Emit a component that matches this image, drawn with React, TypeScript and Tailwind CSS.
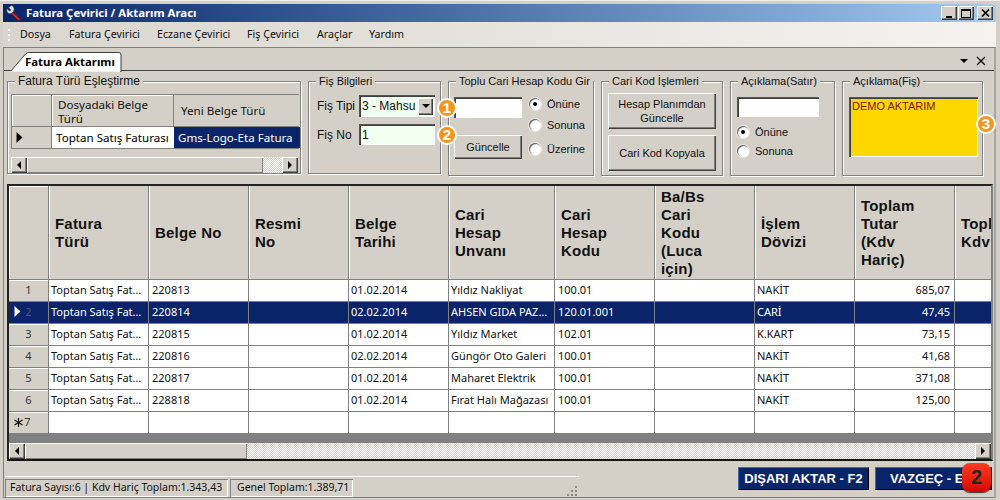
import React from "react";

const arial = "font-['Liberation_Sans',Arial,sans-serif]";
const btn = "bg-[#d4d0c8] text-[#111] shadow-[inset_1px_1px_0_#fff,inset_-1px_-1px_0_#404040,inset_-2px_-2px_0_#808080] flex items-center justify-center text-center";
const sunken = "shadow-[inset_1px_1px_0_#555,inset_2px_2px_0_#404040,inset_-1px_-1px_0_#fff]";
const track = "bg-[repeating-conic-gradient(#d4d0c8_0_25%,#ffffff_0_50%)] bg-[length:2px_2px]";

function Arrow({ dir, color = "#000" }: { dir: "l" | "r" | "d"; color?: string }) {
  const pts = dir === "l" ? "5,0 5,8 1,4" : dir === "r" ? "1,0 1,8 5,4" : "0,1 8,1 4,5";
  return (
    <svg width={dir === "d" ? 8 : 6} height={dir === "d" ? 6 : 8} viewBox={dir === "d" ? "0 0 8 6" : "0 0 6 8"}>
      <polygon points={pts} fill={color} />
    </svg>
  );
}

function BigArrow({ color = "#000" }: { color?: string }) {
  return (
    <svg width="7" height="11" viewBox="0 0 7 11">
      <polygon points="0.5,0 0.5,11 6.5,5.5" fill={color} />
    </svg>
  );
}

function Group({ title, className, children }: { title: string; className: string; children?: React.ReactNode }) {
  return (
    <div className={"relative flex-none border border-[#808080] shadow-[inset_1px_1px_0_#fff,1px_1px_0_#fff] " + className}>
      <span className="absolute left-[7px] top-[-9px] bg-[#d4d0c8] px-[3px] text-[11px] leading-[16px] text-[#111] whitespace-nowrap">{title}</span>
      {children}
    </div>
  );
}

function Radio({ checked, label, className = "" }: { checked?: boolean; label: string; className?: string }) {
  return (
    <div className={"flex items-center gap-[6px] text-[11px] leading-[14px] text-[#111] " + className}>
      <span className="w-[12px] h-[12px] rounded-full bg-white shadow-[inset_1px_1px_1px_#555,0_0_0_1px_#eceae5] flex items-center justify-center">
        {checked && <span className="w-[4px] h-[4px] rounded-full bg-black" />}
      </span>
      {label}
    </div>
  );
}

function Badge({ n, className }: { n: number; className: string }) {
  return (
    <span className={"absolute w-[20px] h-[20px] rounded-full border-2 border-white bg-[#f7941d] text-white font-bold text-[15px] leading-[16px] text-center font-['Liberation_Sans',Arial,sans-serif] " + className}>{n}</span>
  );
}

const cols = [
  "Fatura\nTürü", "Belge No", "Resmi\nNo", "Belge\nTarihi", "Cari\nHesap\nUnvanı", "Cari\nHesap\nKodu",
  "Ba/Bs\nCari\nKodu\n(Luca\niçin)", "İşlem\nDövizi", "Toplam\nTutar\n(Kdv\nHariç)", "Topl\nKdv",
];
const rows = [
  ["Toptan Satış Fat…", "220813", "", "01.02.2014", "Yıldız Nakliyat", "100.01", "", "NAKİT", "685,07", ""],
  ["Toptan Satış Fat…", "220814", "", "02.02.2014", "AHSEN GIDA PAZ…", "120.01.001", "", "CARİ", "47,45", ""],
  ["Toptan Satış Fat…", "220815", "", "01.02.2014", "Yıldız Market", "102.01", "", "K.KART", "73,15", ""],
  ["Toptan Satış Fat…", "220816", "", "02.02.2014", "Güngör Oto Galeri", "100.01", "", "NAKİT", "41,68", ""],
  ["Toptan Satış Fat…", "220817", "", "01.02.2014", "Maharet Elektrik", "100.01", "", "NAKİT", "371,08", ""],
  ["Toptan Satış Fat…", "228818", "", "01.02.2014", "Fırat Halı Mağazası", "100.01", "", "NAKİT", "125,00", ""],
  ["", "", "", "", "", "", "", "", "", ""],
];
const gridCols = "grid grid-cols-[40px_100px_100px_100px_100px_106px_100px_100px_100px_100px_38px]";

function HScroll({ thumb }: { thumb: string }) {
  const b = "w-[16px] h-[16px] flex-none " + btn;
  return (
    <div className="flex h-[16px] flex-none bg-[#d4d0c8]">
      <div className={b}><Arrow dir="l" /></div>
      <div className={thumb + " h-[16px] flex-none shadow-[inset_1px_1px_0_#fff,inset_-1px_-1px_0_#808080] bg-[#d4d0c8]"} />
      <div className={"flex-1 " + track} />
      <div className={b}><Arrow dir="r" /></div>
    </div>
  );
}

export default function App() {
  return (
    <div className="relative w-[1000px] h-[500px] overflow-hidden bg-[#d4d0c8] flex flex-col pt-[3px] pl-[3px] pr-[4px] border-t border-[#efeeea] font-['Noto_Sans',sans-serif]">
      {/* title bar */}
      <div className="h-[18px] flex-none flex items-center pl-[3px] pr-[3px] bg-gradient-to-r from-[#0a246a] to-[#a6caf0]">
        <svg width="16" height="16" viewBox="0 0 16 16" className="flex-none">
          <path d="M5 0.5 L2.8 2.8 L5 5 L3.5 6 L1 3.8 Q0 6 2 8 Q3.8 9.2 6 8 L7.5 6.5 Q8.8 4 7.5 2 Q6.5 0.7 5 0.5 Z" fill="#e6e6e6" stroke="#444" strokeWidth="0.6" />
          <path d="M7 7.5 L14.5 14.5 Q13.5 16 12 15 L5.8 9 Z" fill="#e8281a" stroke="#801008" strokeWidth="0.5" />
        </svg>
        <span className="ml-[4px] text-white font-bold text-[11.4px] leading-[16px] whitespace-nowrap">Fatura Çevirici / Aktarım Aracı</span>
        <div className="ml-auto flex gap-[1px]">
          <div className={btn + " w-[16px] h-[14px] items-end pb-[2px]"}><span className="w-[6px] h-[2px] bg-black" /></div>
          <div className={btn + " w-[16px] h-[14px]"}><span className="w-[10px] h-[9px] border border-black border-t-2" /></div>
          <div className={btn + " w-[16px] h-[14px] ml-[2px]"}>
            <svg width="9" height="8" viewBox="0 0 9 8"><path d="M1 0.5 L8 7.5 M8 0.5 L1 7.5" stroke="#000" strokeWidth="1.6" /></svg>
          </div>
        </div>
      </div>
      {/* menu */}
      <div className="h-[25px] flex-none flex items-center bg-gradient-to-r from-[#d9d5ce] to-[#f4f3f0] text-[10.7px] text-[#111]">
        <div className="w-[4px] h-[12px] ml-[5px] mr-[8px] flex-none flex flex-col justify-between">
          <span className="w-[2px] h-[2px] bg-white" /><span className="w-[2px] h-[2px] bg-white" /><span className="w-[2px] h-[2px] bg-white" />
        </div>
        <span className="w-[49px]">Dosya</span>
        <span className="w-[88px]">Fatura Çevirici</span>
        <span className="w-[90px]">Eczane Çevirici</span>
        <span className="w-[70px]">Fiş Çevirici</span>
        <span className="w-[52px]">Araçlar</span>
        <span>Yardım</span>
      </div>
      {/* tab panel */}
      <div className="flex-1 flex flex-col min-h-0 border-t border-l border-b border-[#808080] border-r-2 border-r-[#a8a59e]">
        <div className="h-[23px] flex-none flex items-end border-b border-[#404040] pl-[6px] pr-[8px]">
          <div className="relative w-[112px] h-[19px] mb-[-1px] flex-none">
            <svg className="absolute inset-0" width="112" height="20" viewBox="0 0 112 20">
              <path d="M0.5 19.5 L16 1.5 Q17 0.5 19 0.5 L109 0.5 Q111 0.5 111 3 L111 20 L0.5 20 Z" fill="#fff" stroke="#404040" />
              <path d="M0 19.7 H110" stroke="#fff" />
            </svg>
            <span className="absolute left-[15px] top-[2px] text-[11.4px] leading-[16px] font-bold text-black whitespace-nowrap">Fatura Aktarımı</span>
          </div>
          <div className="ml-auto flex items-center gap-[8px] pb-[4px]">
            <Arrow dir="d" />
            <svg width="10" height="10" viewBox="0 0 10 10"><path d="M1 1 L9 9 M9 1 L1 9" stroke="#000" strokeWidth="1.3" /></svg>
          </div>
        </div>

        {/* groups */}
        <div className={"flex-none h-[95px] mt-[10px] ml-[3px] flex items-start gap-[7px] text-[12px] text-[#111] " + arial}>
          <Group title="Fatura Türü Eşleştirme" className="w-[294px] h-[93px] pt-[12px] pl-[3px] pr-[3px] [&>span]:text-[12px]">
            <div className="w-[288px] border border-[#808080] border-r-0 text-[11.6px] font-['Noto_Sans',sans-serif]">
              <div className="grid grid-cols-[40px_122px_126px] h-[32px] border-b border-[#808080]">
                <div className="border-r border-[#808080] shadow-[inset_1px_1px_0_#fff]" />
                <div className="pl-[6px] pr-[4px] leading-[14px] pt-[3px] border-r border-[#808080] shadow-[inset_1px_1px_0_#fff]">Dosyadaki Belge Türü</div>
                <div className="pl-[7px] flex items-center">Yeni Belge Türü</div>
              </div>
              <div className="grid grid-cols-[40px_122px_126px] h-[21px]">
                <div className="border-r border-[#808080] flex items-center pl-[4px]"><BigArrow /></div>
                <div className="bg-white flex items-center pl-[4px] whitespace-nowrap text-black">Toptan Satış Faturası</div>
                <div className="bg-[#0a246a] text-white flex items-center pl-[4px] whitespace-nowrap">Gms-Logo-Eta Fatura</div>
              </div>
            </div>
            <div className="mt-[8px] w-[287px]"><HScroll thumb="w-[236px]" /></div>
          </Group>

          <Group title="Fiş Bilgileri" className="w-[133px] h-[93px] pt-[13px] pl-[8px]">
            <div className="flex items-center h-[22px]">
              <span className="w-[42px]">Fiş Tipi</span>
              <div className={"w-[76px] h-[22px] bg-[#f0fff0] flex items-center justify-between pl-[3px] pr-[2px] text-[12px] whitespace-nowrap " + sunken}>
                3 - Mahsu
                <span className={btn + " w-[15px] h-[17px] flex-none"}><Arrow dir="d" /></span>
              </div>
            </div>
            <div className="flex items-center h-[21px] mt-[7px]">
              <span className="w-[42px]">Fiş No</span>
              <div className={"w-[76px] h-[21px] bg-[#f0fff0] flex items-center pl-[3px] text-[12px] " + sunken}>1</div>
            </div>
          </Group>

          <Group title="Toplu Cari Hesap Kodu Gir" className="w-[146px] h-[95px] pt-[15px] pl-[5px] flex">
            <div className="w-[68px] flex-none">
              <div className={"h-[21px] bg-white " + sunken} />
              <div className={btn + " h-[24px] mt-[17px] text-[11px]"}>Güncelle</div>
            </div>
            <div className="ml-[7px] flex flex-col">
              <Radio checked label="Önüne" className="h-[14px]" />
              <Radio label="Sonuna" className="h-[14px] mt-[7px]" />
              <Radio label="Üzerine" className="h-[14px] mt-[10px]" />
            </div>
          </Group>

          <Group title="Cari Kod İşlemleri" className="w-[122px] h-[95px] pt-[11px] pl-[6px]">
            <div className={btn + " w-[108px] h-[36px] text-[11px] leading-[14px]"}>Hesap Planımdan<br />Güncelle</div>
            <div className={btn + " w-[108px] h-[36px] mt-[6px] text-[11px]"}>Cari Kod Kopyala</div>
          </Group>

          <Group title="Açıklama(Satır)" className="w-[105px] h-[95px] pt-[15px] pl-[6px]">
            <div className={"w-[82px] h-[20px] bg-white " + sunken} />
            <Radio checked label="Önüne" className="h-[14px] mt-[8px]" />
            <Radio label="Sonuna" className="h-[14px] mt-[5px]" />
          </Group>

          <Group title="Açıklama(Fiş)" className="w-[141px] h-[95px] pt-[15px] pl-[6px]">
            <div className={"w-[129px] h-[60px] bg-[#ffd700] text-[#7a1500] text-[11px] leading-[16px] pl-[3px] pt-[1px] " + sunken}>DEMO AKTARIM</div>
          </Group>
        </div>

        {/* data grid */}
        <div className="mt-[8px] ml-[3px] w-[986px] h-[277px] flex-none flex flex-col overflow-hidden bg-[#808080] border-2 border-t-[#222] border-l-[#222] border-r-[#808080] border-b-[#111]">
          <div className="flex-none w-[1100px]">
            <div className={gridCols + " h-[94px] border-b border-[#808080] bg-[#d4d0c8]"}>
              <div className="border-r border-[#808080] shadow-[inset_1px_1px_0_#fff]" />
              {cols.map((c, i) => (
                <div key={i} className={"border-r border-[#808080] shadow-[inset_1px_0_0_#fff] pl-[6px] flex items-center whitespace-pre-line text-[15px] tracking-[0.2px] leading-[18px] font-bold text-[#111] " + arial}>{c}</div>
              ))}
            </div>
            {rows.map((r, i) => {
              const sel = i === 1;
              return (
                <div key={i} className={gridCols + " h-[22px] text-[11px] " + (sel ? "bg-[#0a246a] text-white" : "bg-white text-[#111]")}>
                  <div className={"border-r border-b border-[#808080] flex items-center justify-center relative " + (sel ? "text-[#555]" : "bg-[#d4d0c8] text-[#333] shadow-[inset_0_1px_0_#fff]")}>
                    {sel && <span className="absolute left-[5px] top-[4px] flex"><BigArrow color="#fff" /></span>}
                    {i === 6 && (
                      <svg className="absolute left-[5px] top-[6px]" width="9" height="9" viewBox="0 0 9 9">
                        <path d="M4.5 0 V9 M0.5 2 L8.5 7 M8.5 2 L0.5 7" stroke="#111" strokeWidth="1.2" />
                      </svg>
                    )}
                    <span className={i === 6 ? "mr-[1px] ml-[-1px]" : ""}>{i + 1}</span>
                  </div>
                  {r.map((v, j) => (
                    <div key={j} className={"border-r border-b border-[#808080] flex items-center whitespace-nowrap overflow-hidden px-[2px] " + (j === 8 ? "justify-end pr-[4px]" : "") + (j === 1 || j === 5 ? " pl-[3px]" : "")}>{v}</div>
                  ))}
                </div>
              );
            })}
          </div>
          <div className="mt-auto"><HScroll thumb="w-[222px]" /></div>
        </div>

        {/* bottom */}
        <div className="flex-1 min-h-0 flex items-start ml-[1px]">
          <div className="w-[574px] mt-[15px] border-t border-white pt-[2px] flex gap-[2px] relative text-[10.5px] text-[#111]">
            <div className="w-[223px] h-[18px] flex items-center pl-[5px] whitespace-nowrap shadow-[inset_1px_1px_0_#808080,inset_-1px_-1px_0_#fff]">Fatura Sayısı:6 | Kdv Hariç Toplam:1.343,43</div>
            <div className="w-[123px] h-[18px] flex items-center pl-[7px] whitespace-nowrap shadow-[inset_1px_1px_0_#808080,inset_-1px_-1px_0_#fff]">Genel Toplam:1.389,71</div>
            <svg className="absolute right-[1px] top-[8px]" width="11" height="11" viewBox="0 0 11 11">
              <path d="M8 1h2v2h-2z M4 5h2v2h-2z M8 5h2v2h-2z M0 9h2v2h-2z M4 9h2v2h-2z M8 9h2v2h-2z" fill="#8a8780" />
            </svg>
          </div>
          <div className={"ml-[159px] mt-[6px] flex gap-[6px] text-white font-bold text-[13px] " + arial}>
            <div className="w-[131px] h-[23px] flex items-center justify-center bg-[#0a246a] border border-[#3a6ea5] border-r-black border-b-black whitespace-nowrap">DIŞARI AKTAR - F2</div>
            <div className="w-[117px] h-[23px] flex items-center pl-[14px] bg-[#0a246a] border border-[#3a6ea5] border-r-black border-b-black whitespace-nowrap">VAZGEÇ - ESC</div>
          </div>
        </div>
      </div>
      <div className="h-[2px] flex-none" />

      {/* overlays */}
      <Badge n={1} className="left-[437px] top-[97px]" />
      <Badge n={2} className="left-[437px] top-[124px]" />
      <Badge n={3} className="left-[976px] top-[113px]" />
      <span className={"absolute left-[962px] top-[462px] w-[29px] h-[29px] rounded-[8px] bg-gradient-to-b from-[#ff3a20] to-[#d40000] shadow-[0_1px_1px_#333] text-[#222] font-bold text-[20px] leading-[29px] text-center " + arial}>2</span>
    </div>
  );
}
